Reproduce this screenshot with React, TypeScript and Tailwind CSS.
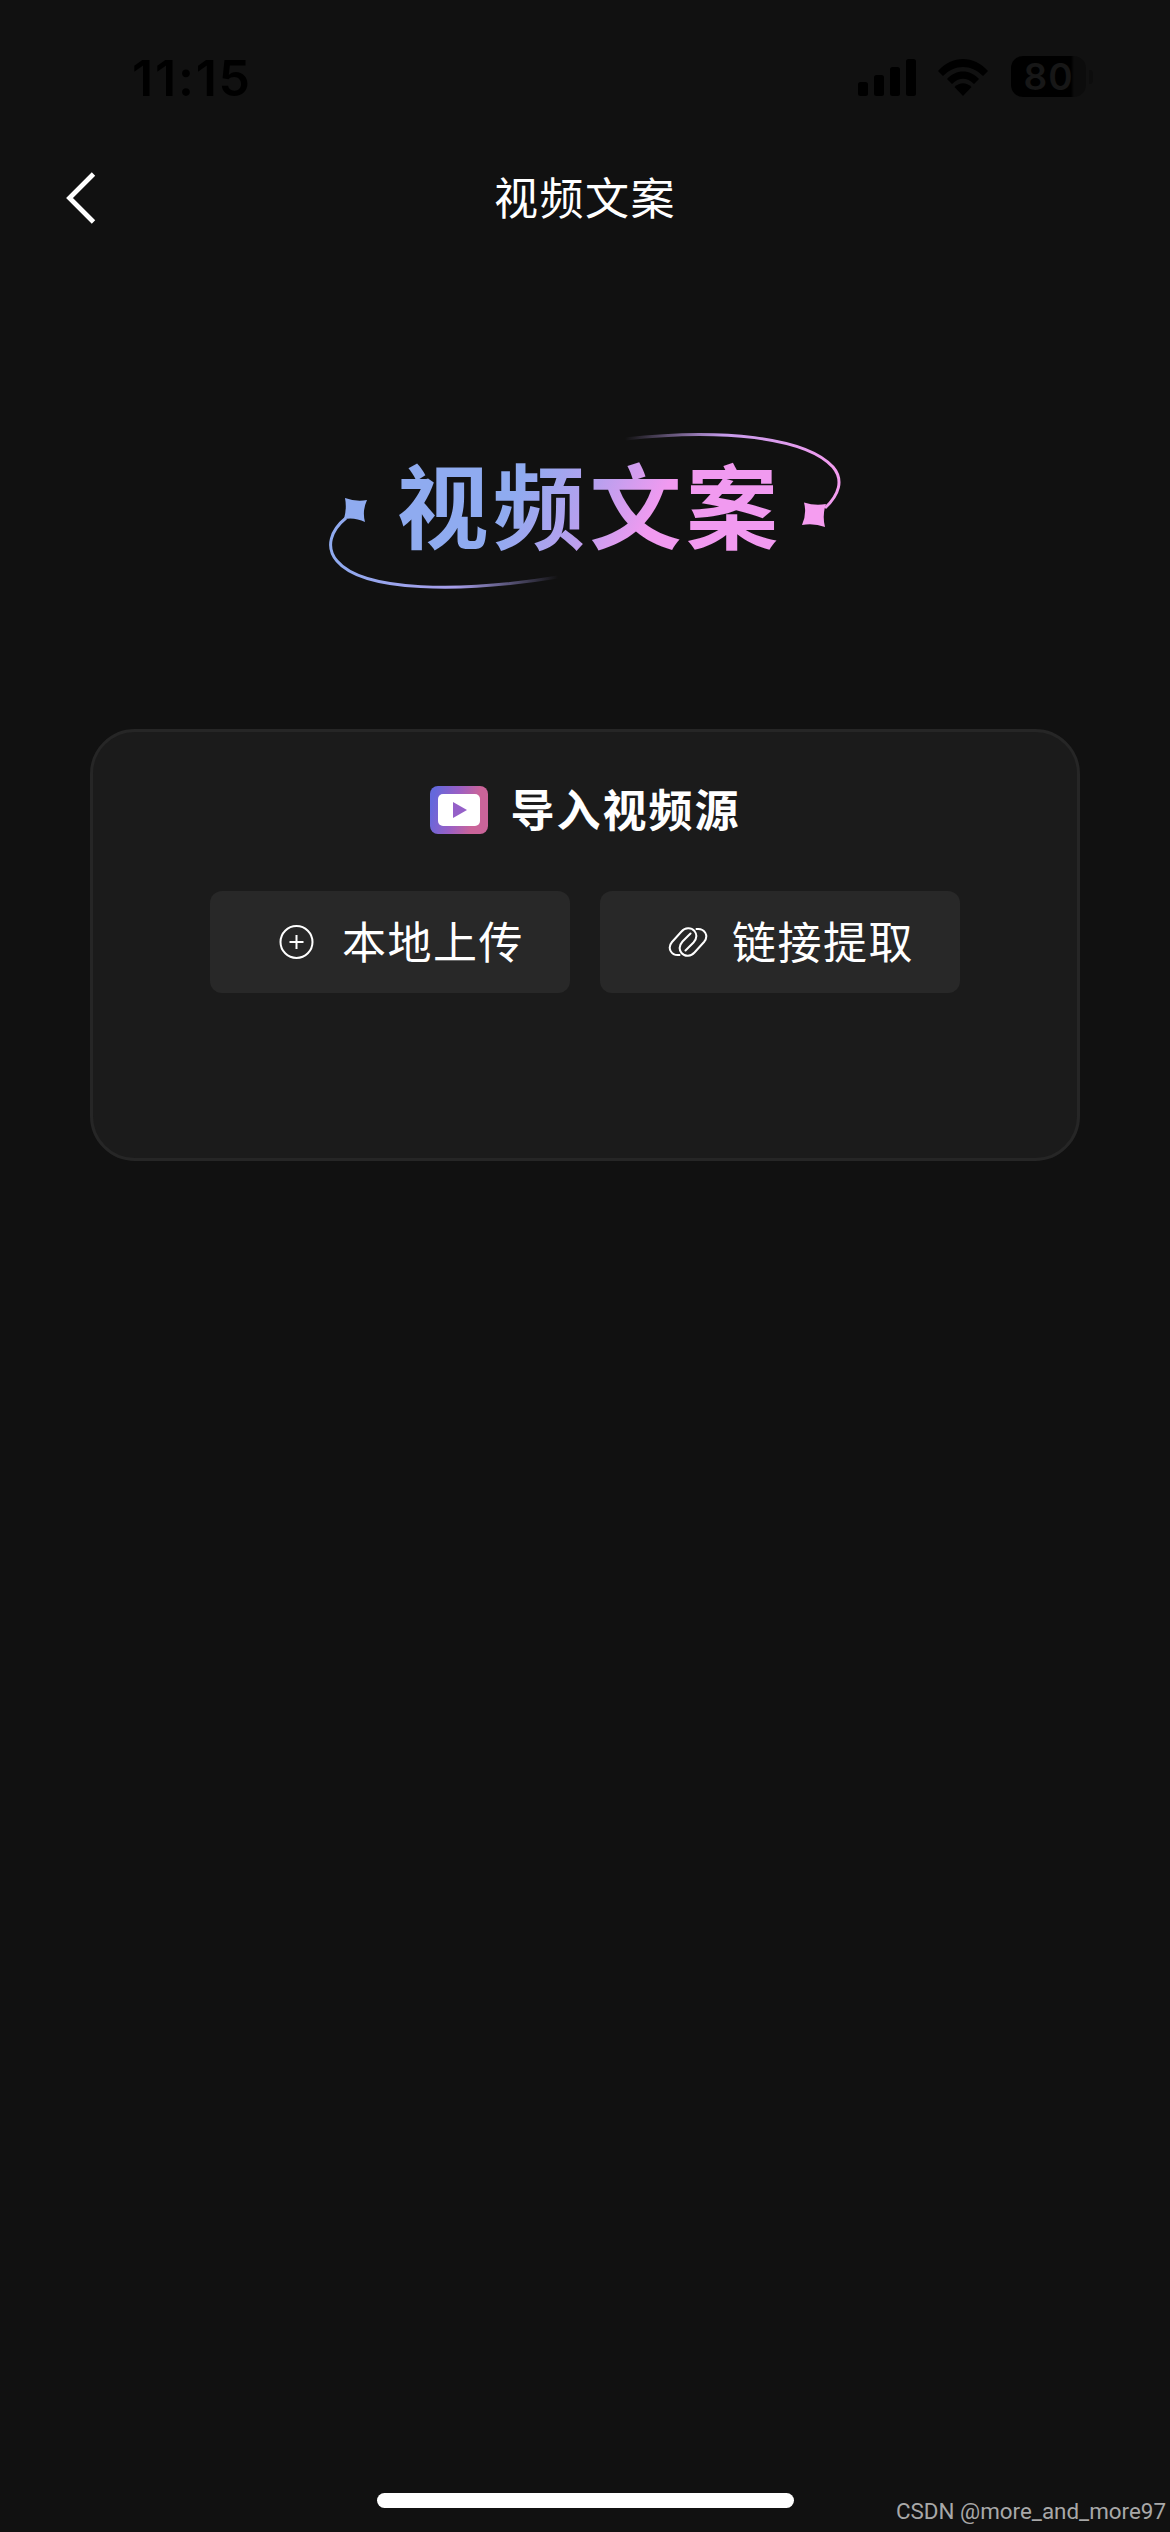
import React from 'react';

function StatusBar() {
  return (
    <div className="flex h-[156px] items-start justify-between pl-[132px] pr-[77px] pt-[48px] text-black">
      <span className="font-['Inter'] text-[50px] font-semibold leading-[60px] tracking-[1.8px]">11:15</span>
      <div className="flex items-center gap-[18px] pt-[8px]">
        <svg width="62" height="40" viewBox="0 0 62 40" fill="currentColor">
          <rect x="0" y="25" width="10" height="14" rx="2.5" />
          <rect x="16" y="18" width="10" height="21" rx="2.5" />
          <rect x="32" y="10" width="10" height="29" rx="2.5" />
          <rect x="48" y="2" width="10" height="37" rx="2.5" />
        </svg>
        <svg width="55" height="40" viewBox="0 0 55 40" fill="currentColor">
          <path d="M0 14C14-2 36-2 50 14L45 19C33 7 17 7 5 19Z" />
          <path d="M9 22C18 12 32 12 41 22L36 27C29 20 21 20 14 27Z" />
          <path d="M16.500 30C22 25 28 25 33.500 30L25 39Z" />
        </svg>
        <div className="flex items-center">
          <div className="flex h-[41px] w-[75px] items-center justify-center rounded-[12px] bg-[linear-gradient(90deg,#000_80%,#0c0c0c_84%)] font-['Inter'] text-[37px] font-semibold tracking-[1px] text-[#171717]">
            80
          </div>
          <div className="ml-[3px] h-[14px] w-[4px] rounded-r-full bg-[#0d0d0d]" />
        </div>
      </div>
    </div>
  );
}

function NavBar() {
  return (
    <header className="grid h-[84px] grid-cols-[1fr_auto_1fr] items-center">
      <button type="button" aria-label="返回" className="pl-[64px]">
        <svg width="36" height="52" viewBox="0 0 36 52" fill="none">
          <path d="M29.500 2L5.500 26L29.500 50" stroke="#fff" strokeWidth="4.800" />
        </svg>
      </button>
      <h1 className="pb-[4px] text-[44px] leading-[66px] tracking-[1.5px]">视频文案</h1>
      <span />
    </header>
  );
}

function Logo() {
  return (
    <div className="relative flex h-[180px] w-[530px] items-center justify-center">
      {/* Orbit strokes around the wordmark */}
      <svg className="absolute inset-0" width="530" height="180" viewBox="320 420 530 180" fill="none">
        <defs>
          <linearGradient id="orbit-left" gradientUnits="userSpaceOnUse" x1="330" y1="0" x2="558" y2="0">
            <stop offset="0" stopColor="#8fabf0" />
            <stop offset="0.55" stopColor="#a79eea" />
            <stop offset="1" stopColor="#a79eea" stopOpacity="0" />
          </linearGradient>
          <linearGradient id="orbit-right" gradientUnits="userSpaceOnUse" x1="625" y1="0" x2="841" y2="0">
            <stop offset="0" stopColor="#bba2e8" stopOpacity="0" />
            <stop offset="0.45" stopColor="#c59bea" />
            <stop offset="1" stopColor="#f59df0" />
          </linearGradient>
        </defs>
        <path d="M346 518C331 530 325 547 337 561C363 592 461 593 558 577" stroke="url(#orbit-left)" strokeWidth="3" />
        <path d="M345 498Q356 502 367 500Q362 511 365 522Q355 517 344 519Q347 508 345 498Z" fill="#8fabf0" />
        <path d="M625 439C720 428 806 437 833 467C844 480 839 495 825 508" stroke="url(#orbit-right)" strokeWidth="3" />
        <path d="M804 502.500Q815 506 826 504Q822 515 825 527Q814 523 802 525Q807 514 804 502.500Z" fill="#f59df0" />
      </svg>
      <span className="-mt-[16px] ml-[9px] bg-[linear-gradient(115deg,#8fabf0_32%,#b5a0ee_49%,#f19af0_66%,#f19af0_100%)] bg-clip-text text-[92px] font-bold leading-[120px] tracking-[4.500px] text-transparent">
        视频文案
      </span>
    </div>
  );
}

function VideoIcon() {
  return (
    <svg width="58" height="48" viewBox="0 0 58 48">
      <defs>
        <linearGradient id="video" x1="0" y1="0" x2="1" y2="0.2">
          <stop offset="0.1" stopColor="#6468dc" />
          <stop offset="0.5" stopColor="#9a5fc4" />
          <stop offset="0.85" stopColor="#ca6499" />
        </linearGradient>
      </defs>
      <rect width="58" height="48" rx="8" fill="url(#video)" />
      <rect x="8" y="8" width="42" height="32" rx="5" fill="#fff" />
      <path d="M23 16L37 24L23 32Z" fill="#9560c8" />
    </svg>
  );
}

function PlusIcon() {
  return (
    <svg width="36" height="36" viewBox="0 0 36 36" fill="none" stroke="#fff" strokeWidth="2">
      <circle cx="18.500" cy="18" r="16" />
      <path d="M18.500 11V25M11.500 18H25.500" />
    </svg>
  );
}

function LinkIcon() {
  return (
    <svg width="40" height="30" viewBox="0 0 40 30" fill="none" stroke="#fff" strokeWidth="2" strokeLinecap="round">
      <path d="M11.500 28C3 29 -1 21 4 15L13.500 4.500C17 0.500 23 0 26.500 4C29.500 8 29 11.500 25.500 15.500L17.500 23.500" />
      <path d="M28.500 2C37 1 41 9 36 15L26.500 25.500C23 29.500 17 30 13.500 26C10.500 22 11 18.500 14.500 14.500L22.500 6.500" />
    </svg>
  );
}

interface SourceButtonProps {
  icon: React.ReactNode;
  label: string;
}

function SourceButton({ icon, label }: SourceButtonProps) {
  return (
    <button type="button" className="flex h-[102px] w-[360px] items-center rounded-[12px] bg-[#282828] pl-[68px]">
      <span className="flex w-[64px] items-center">{icon}</span>
      <span className="pb-[5px] text-[44px] font-normal leading-[66px] tracking-[1.5px]">{label}</span>
    </button>
  );
}

export default function App() {
  return (
    <div className="flex h-[2532px] w-[1170px] flex-col bg-[#111] font-['Noto_Sans_CJK_SC',sans-serif] text-white">
      <StatusBar />
      <NavBar />

      <main className="flex flex-1 flex-col items-center pt-[180px]">
        <Logo />
        <section className="mt-[129px] flex h-[432px] w-[990px] flex-col items-center rounded-[45px] border-[3px] border-[#262626] bg-[#1b1b1b] pt-[45px]">
          <div className="flex items-center gap-[23px]">
            <VideoIcon />
            <h2 className="pb-[3px] text-[44px] font-bold leading-[63px] tracking-[2px]">导入视频源</h2>
          </div>
          <div className="mt-[48px] flex gap-[30px]">
            <SourceButton icon={<PlusIcon />} label="本地上传" />
            <SourceButton icon={<LinkIcon />} label="链接提取" />
          </div>
        </section>
      </main>

      <footer className="grid h-[39px] grid-cols-[1fr_417px_1fr] items-start">
        <span />
        <div className="h-[15px] rounded-full bg-white" />
        <span className="justify-self-end pr-[4px] pt-[4px] font-['Roboto'] text-[22.400px] leading-[28px] text-[#a8a8a8]">
          CSDN @more_and_more97
        </span>
      </footer>
    </div>
  );
}
